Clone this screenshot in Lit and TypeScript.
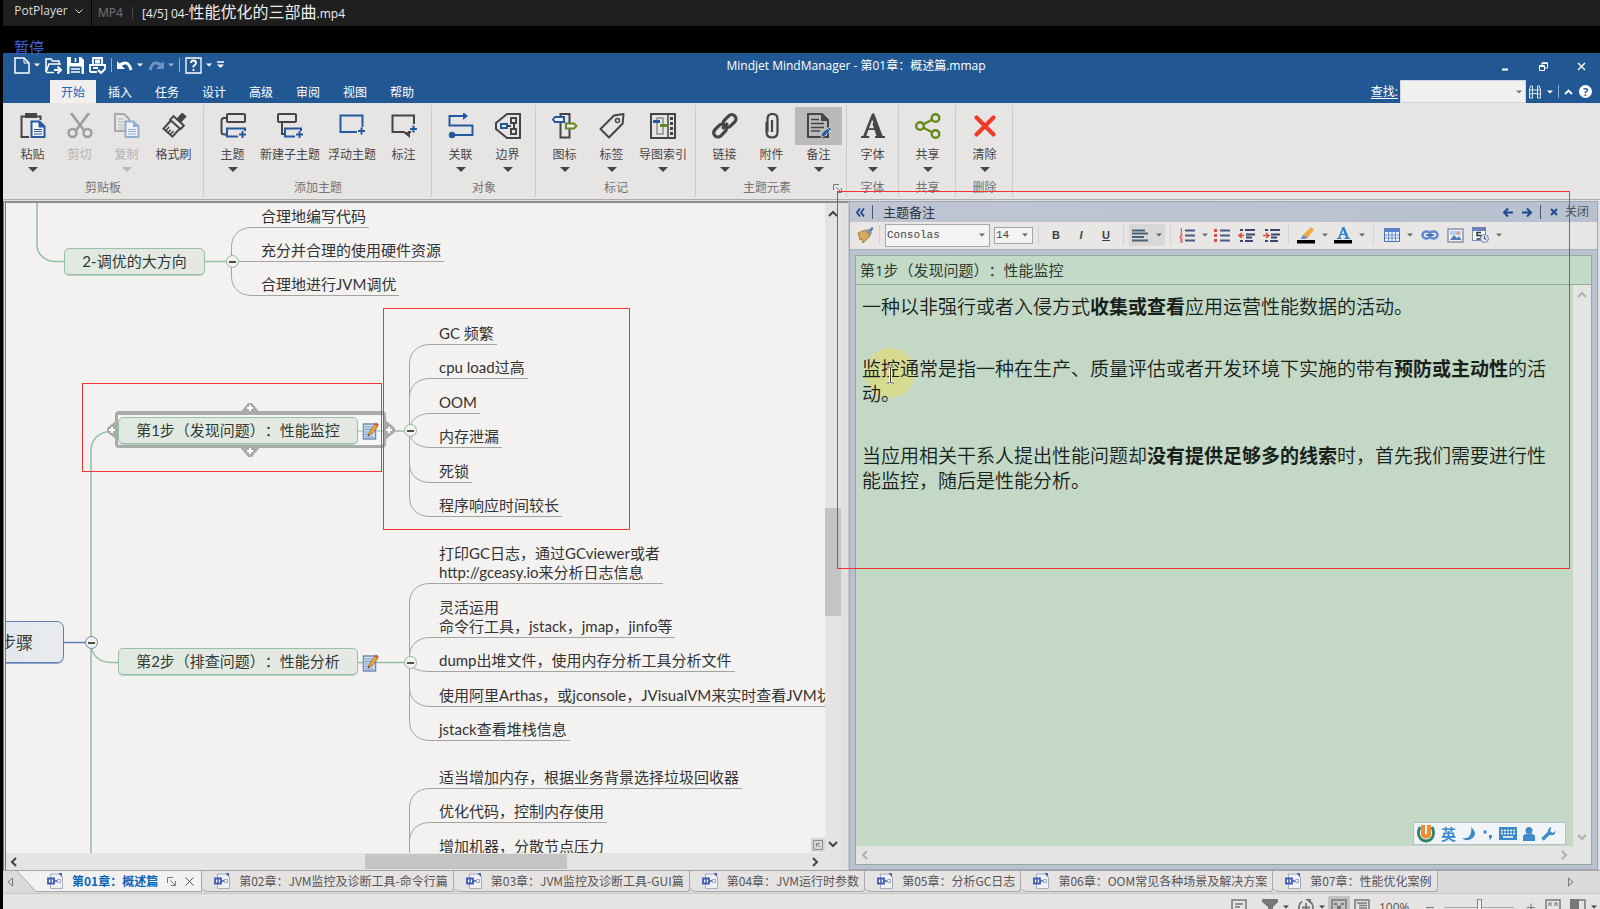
import { LitElement, html, svg, css, nothing } from "lit";
import { customElement } from "lit/decorators.js";
import { classMap } from "lit/directives/class-map.js";
import { styleMap } from "lit/directives/style-map.js";

const DARK = "#454545";
const BLUE = "#2459a0";
const GREEN = "#628a1c";

const base = css`
  *, *::before, *::after { box-sizing: border-box; }
  button, input, select { font: inherit; color: inherit; margin: 0; padding: 0; border: 0; background: none; border-radius: 0; outline: none; }
  button { cursor: pointer; display: inline-flex; align-items: center; justify-content: center; }
  svg { display: block; flex: none; }
`;

const ico = (w: number, h: number, body: unknown) =>
  html`<svg width=${w} height=${h} viewBox="0 0 ${w} ${h}" fill="none" aria-hidden="true">${body}</svg>`;

const caret = (color = "#555", w = 7) =>
  html`<svg width=${w} height="4" viewBox="0 0 8 4" aria-hidden="true"><path d="M0 0h8L4 4z" fill=${color}/></svg>`;

const chevron = (dir: "up" | "down" | "left" | "right", color = "#444") => {
  const d = { up: "M1 8l4-4 4 4", down: "M1 3l4 4 4-4", left: "M7 1L3 5l4 4", right: "M3 1l4 4-4 4" }[dir];
  return html`<svg width="10" height="10" viewBox="0 0 10 10" fill="none" aria-hidden="true"><path d=${d} stroke=${color} stroke-width="2"/></svg>`;
};

const plus = (x: number, y: number) =>
  svg`<path d="M${x - 3.5} ${y}h7M${x} ${y - 3.5}v7" stroke=${BLUE} stroke-width="2"/>`;

const ribbonIcons: Record<string, unknown> = {
  paste: svg`<path d="M9 24H1.5V3.5h19V7" stroke=${DARK} stroke-width="2"/><path d="M5 0h12v5H5z" fill=${DARK}/>
    <path d="M11.5 8.5h8l5 5V24h-13z" fill="#f4f4f6" stroke=${BLUE} stroke-width="2"/><path d="M19 9v5h5" fill=${BLUE} stroke=${BLUE}/>
    <path d="M14 16.5h8M14 18.5h8M14 21h8" stroke=${BLUE}/>`,
  cut: svg`<path d="M4 0l13.500 18M22 0L8.500 18" stroke="#9d9d9d" stroke-width="2.600"/><circle cx="5.500" cy="20" r="4" stroke="#9d9d9d" stroke-width="2.400"/><circle cx="20.500" cy="20" r="4" stroke="#9d9d9d" stroke-width="2.400"/>`,
  copy: svg`<path d="M1 1h9l5 5v12H1z" stroke="#a9a9a9" stroke-width="2"/><path d="M4 6h5M4 9h8M4 12h8M4 15h6" stroke="#b5b5b5"/>
    <path d="M11.500 8.500h8l5 5V24h-13z" fill="#eef1f6" stroke="#93add0" stroke-width="2"/><path d="M19 9v5h5" fill="#93add0"/><path d="M14 16.500h8M14 18.500h8M14 21h8" stroke="#93add0"/>`,
  painter: svg`<g transform="rotate(42 13 13)" stroke=${DARK} stroke-width="2"><path d="M11 -1.500h4v7h-4z" fill=${DARK}/><path d="M6 6h14v5H6z"/><path d="M7 11v11h12V11"/><path d="M10 22v-5M13 22v-4M16 22v-5" stroke-width="1.500"/></g>`,
  topic: svg`<path d="M7 5H4Q1.500 5 1.500 8v11q0 2.500 3 2.500h2" stroke=${DARK} stroke-width="2"/><rect x="7" y="1" width="18" height="8" rx="1" stroke=${DARK} stroke-width="2"/>
    <path d="M25 18v-2.500H7V23.500h11" stroke=${BLUE} stroke-width="2"/>${plus(22.5, 21.5)}`,
  subtopic: svg`<rect x="1" y="1" width="18" height="8" rx="1" stroke=${DARK} stroke-width="2"/><path d="M5 9v12h3" stroke=${DARK} stroke-width="2"/>
    <path d="M24 18v-2.500H8V23.500h10" stroke=${BLUE} stroke-width="2"/>${plus(22.500, 21.5)}`,
  floating: svg`<path d="M18 19H1.500V2.500h22V14" stroke=${BLUE} stroke-width="2"/>${plus(22.500, 18)}`,
  callout: svg`<path d="M23 11V2.500H1.500V19H13l5 4v-4h2" stroke=${DARK} stroke-width="2"/><path d="M12 19h7v5z" fill=${DARK}/>${plus(22.5, 16)}`,
  relation: svg`<path d="M17 3H1.500v9.500h23V22H5" stroke=${BLUE} stroke-width="2"/><path d="M15-1l5 4-5 4z" fill=${BLUE}/><circle cx="4" cy="22" r="3.200" fill=${BLUE}/>`,
  boundary: svg`<path d="M25 1H12L1 10v6l11 9h13z" stroke=${DARK} stroke-width="2"/><rect x="6" y="11" width="6" height="4" stroke=${BLUE} stroke-width="2"/>
    <path d="M12 13h4M19 9v8" stroke=${DARK} stroke-width="2"/><rect x="16" y="5" width="5" height="5" stroke=${DARK} stroke-width="2"/><rect x="16" y="16" width="5" height="5" stroke=${DARK} stroke-width="2"/>`,
  marker: svg`<rect x="8.500" y="1" width="9" height="23.500" stroke=${DARK} stroke-width="2"/><path d="M3 4h9v5H3L1 6.500z" fill="#eee" stroke=${BLUE} stroke-width="2"/><path d="M14 10.500h8l2.500 2.500-2.500 2.500h-8z" fill="#eee" stroke=${GREEN} stroke-width="2"/>`,
  tag: svg`<path d="M15 2.500L24.500 1l-.8 9.500L10 24.500 1.500 16z" stroke=${DARK} stroke-width="2" stroke-linejoin="round"/><circle cx="18.500" cy="7.500" r="2" stroke=${DARK} stroke-width="1.500"/>`,
  index: svg`<rect x="1" y="1" width="24" height="24" stroke=${DARK} stroke-width="2"/><path d="M18 1v24" stroke=${DARK} stroke-width="1.500"/><rect x="7" y="5" width="6" height="16" stroke="#8b8b8b" stroke-width="1.500"/>
    <path d="M3 8.500h7" stroke=${BLUE} stroke-width="3"/><path d="M10 12.500h7" stroke=${GREEN} stroke-width="3"/><path d="M21.500 4v18" stroke=${DARK} stroke-width="3" stroke-dasharray="3 2"/>`,
  link: svg`<g transform="rotate(-45 13 13)" stroke=${DARK} stroke-width="3.200"><rect x="-1" y="8.500" width="14.500" height="8.500" rx="4.200"/><rect x="12.500" y="8.500" width="14.500" height="8.500" rx="4.200"/><path d="M9 13h8"/></g>`,
  clip: svg`<path d="M8.500 19V6q0-5 5-5t5 5v13q0 5.500-5.500 5.500T7.500 19V9M13 19V7" stroke=${DARK} stroke-width="2.200"/>`,
  notes: svg`<path d="M2 1h14l6 6v17H2z" stroke=${DARK} stroke-width="2"/><path d="M15 1v7h7z" fill=${DARK}/><path d="M5 6.500h8M5 10.500h13M5 14.500h13M5 18h9" stroke=${DARK} stroke-width="1.500"/>
    <path d="M15 24.500l1-4.500 7-6 2.500 2.500-7 6.500z" fill=${BLUE} stroke="#bababa"/><path d="M21 15l4 4" stroke="#ddd"/>`,
  font: svg`<path d="M1 25v-1.700l2.300-.6L12 .5h2.200l8.300 22.200 2.500.6V25h-10v-1.700l3-.6-2-5.700H8.300l-2 5.700 3 .6V25zM9 15.200h6.300L12.200 6.400z" fill=${DARK}/><path d="M15 8l5 15h-3.500l-4-12z" fill=${DARK}/>`,
  share: svg`<g stroke=${GREEN} stroke-width="2.400"><circle cx="5" cy="13" r="3.800"/><circle cx="20.500" cy="5" r="3.800"/><circle cx="20.500" cy="21" r="3.800"/><path d="M8.500 11.300l8.500-4.500M8.500 14.800l8.500 4.500"/></g>`,
  clear: svg`<path d="M4.500 4.500l17 17M21.500 4.500l-17 17" stroke="#f03a26" stroke-width="4.200" stroke-linecap="round"/>`,
};

interface Tool { label: string; icon: string; drop?: boolean; off?: boolean; on?: boolean; }
interface Group { name: string; tools: Tool[]; launcher?: boolean; tight?: boolean; }

const groups: Group[] = [
  { name: "剪贴板", tools: [
    { label: "粘贴", icon: "paste", drop: true }, { label: "剪切", icon: "cut", off: true },
    { label: "复制", icon: "copy", drop: true, off: true }, { label: "格式刷", icon: "painter" } ] },
  { name: "添加主题", tools: [
    { label: "主题", icon: "topic", drop: true }, { label: "新建子主题", icon: "subtopic" },
    { label: "浮动主题", icon: "floating" }, { label: "标注", icon: "callout" } ] },
  { name: "对象", tools: [{ label: "关联", icon: "relation", drop: true }, { label: "边界", icon: "boundary", drop: true }] },
  { name: "标记", tools: [
    { label: "图标", icon: "marker", drop: true }, { label: "标签", icon: "tag", drop: true }, { label: "导图索引", icon: "index", drop: true } ] },
  { name: "主题元素", launcher: true, tools: [
    { label: "链接", icon: "link", drop: true }, { label: "附件", icon: "clip", drop: true }, { label: "备注", icon: "notes", drop: true, on: true } ] },
  { name: "字体", tight: true, tools: [{ label: "字体", icon: "font", drop: true }] },
  { name: "共享", tools: [{ label: "共享", icon: "share", drop: true }] },
  { name: "删除", tools: [{ label: "清除", icon: "clear", drop: true }] },
];

const ribbonTabs = ["开始", "插入", "任务", "设计", "高级", "审阅", "视图", "帮助"];

const documents = [
  "第01章：概述篇", "第02章：JVM监控及诊断工具-命令行篇", "第03章：JVM监控及诊断工具-GUI篇", "第04章：JVM运行时参数",
  "第05章：分析GC日志", "第06章：OOM常见各种场景及解决方案", "第07章：性能优化案例",
];

const launcherIcon = (c = "#777") => ico(9, 9, svg`<path d="M.5 6V.5H6M3.500 3.500l4.500 4.500M8.500 4v4.500H4" stroke=${c}/>`);

/* ---------- mind map ---------- */

interface Leaf { lines: string[]; y: number; }
interface Branch { x: number; y: number; leaves: Leaf[]; }

// Every leaf is placed by the y of its underline; x, y of a branch is its collapse button.
const branches: Branch[] = [
  { x: 232, y: 262, leaves: [
    { lines: ["合理地编写代码"], y: 227 }, { lines: ["充分并合理的使用硬件资源"], y: 261 }, { lines: ["合理地进行JVM调优"], y: 295 } ] },
  { x: 410, y: 431, leaves: [
    { lines: ["GC 频繁"], y: 344 }, { lines: ["cpu load过高"], y: 378 }, { lines: ["OOM"], y: 413 },
    { lines: ["内存泄漏"], y: 447 }, { lines: ["死锁"], y: 482 }, { lines: ["程序响应时间较长"], y: 516 } ] },
  { x: 410, y: 662, leaves: [
    { lines: ["打印GC日志，通过GCviewer或者", "http://gceasy.io来分析日志信息"], y: 583 },
    { lines: ["灵活运用", "命令行工具，jstack，jmap，jinfo等"], y: 637 },
    { lines: ["dump出堆文件，使用内存分析工具分析文件"], y: 671 },
    { lines: ["使用阿里Arthas，或jconsole，JVisualVM来实时查看JVM状态"], y: 706 },
    { lines: ["jstack查看堆栈信息"], y: 740 } ] },
  { x: 410, y: 900, leaves: [
    { lines: ["适当增加内存，根据业务背景选择垃圾回收器"], y: 788 },
    { lines: ["优化代码，控制内存使用"], y: 822 }, { lines: ["增加机器，分散节点压力"], y: 857 } ] },
];

const LINE = 19;

@customElement("mind-map")
export class MindMap extends LitElement {
  static styles = [base, css`
    :host { display: grid; grid-template-columns: minmax(0, 1fr) 16px; grid-template-rows: minmax(0, 1fr) 17px; min-width: 0; min-height: 0; background: #e4e4e3; }
    .view { position: relative; overflow: hidden; background: #f3f2f1; }
    .stage { position: absolute; left: -6px; top: -203px; width: 1400px; height: 1200px; }
    .wires { position: absolute; inset: 0; }
    .leaf { position: absolute; padding: 0 3px 1px 9px; border-bottom: 1px solid #a2a4a3; white-space: nowrap; }
    .leaf span { display: block; }
    .node { position: absolute; display: flex; align-items: center; justify-content: center; border: 1px solid #97c0a8; border-radius: 5px; background: linear-gradient(90deg, #dfe9e2, #e6e8e3); color: #2f3a35; white-space: nowrap; box-shadow: 0 1px 0 #b5cfbf; }
    .root { justify-content: flex-end; padding-right: 30px; border-color: #5f80b4; background: linear-gradient(90deg, #dde5ef, #e9ebee); font-size: 17px; box-shadow: 0 1px 0 #8ea5c8; border-radius: 7px; }
    .frame { position: absolute; border: 3px solid #a9abaa; border-radius: 4px; border-top-width: 4px; background: #f6f6f5; }
    .fold { position: absolute; width: 13px; height: 13px; border-radius: 50%; border: 1px solid #8fb59d; background: #f3f2f1; }
    .fold::before { content: ""; width: 7px; height: 2px; background: #4c4c4c; flex: none; }
    .fold.blue { border-color: #6c86b4; }
    .grip, .memo { position: absolute; }
    .vbar { display: flex; flex-direction: column; align-items: center; padding: 5px 0 4px; }
    .hbar { display: flex; align-items: center; padding: 0 5px 0 3px; }
    .vbar .before { flex: 286; } .vbar .thumb { flex: 107; width: 16px; background: #c4c4c3; } .vbar .after { flex: 220; }
    .hbar .before { flex: 342; } .hbar .thumb { flex: 200; height: 15px; background: #c4c4c3; } .hbar .after { flex: 241; }
    .zoomfit { position: absolute; right: 0; bottom: 1px; width: 14px; height: 14px; background: #d6d6d5; }
  `];

  private wire(b: Branch, leaf: Leaf) {
    const end = b.x + 20;
    const y = leaf.y + 0.5;
    const x = b.x - 0.5;
    if (Math.abs(y - b.y) < 3) return svg`<path d="M${x} ${y}H${end}"/>`;
    const dir = y < b.y ? 1 : -1;
    const turn = Math.min(19, Math.abs(y - b.y));
    return svg`<path d="M${x} ${b.y}V${y + dir * turn}C${x} ${y + (dir * turn) / 2.4} ${x + 8} ${y} ${end} ${y}"/>`;
  }

  private box(x: number, y: number, w: number, h: number) {
    return styleMap({ left: `${x}px`, top: `${y}px`, width: `${w}px`, height: `${h}px` });
  }

  private memo(x: number, y: number) {
    return html`<svg class="memo" style=${styleMap({ left: `${x}px`, top: `${y}px` })} width="17" height="18" viewBox="0 0 17 18" fill="none" aria-hidden="true">
      <path d="M1.500 2h12v15h-12z" fill="#d3e0f3" stroke="#6f8db9" stroke-width="1.500"/><path d="M3 5h7M3 7.500h6M3 10h5M3 12.500h4M3 15h8" stroke="#6e8fc4"/>
      <path d="M6 14l1.500-4L13 2l3 2-6 8z" fill="#e9a73c" stroke="#8a5a22" stroke-width=".7"/><path d="M12.500 2.500L14 .5l2.700 1.700L15.500 4.500z" fill="#d9503f"/><path d="M6 14l.6-1.700 1 .8z" fill="#333"/></svg>`;
  }

  private grip(x: number, y: number, d: string) {
    return html`<svg class="grip" style=${styleMap({ left: `${x - 11}px`, top: `${y - 11}px` })} width="22" height="22" viewBox="-11 -11 22 22" aria-hidden="true">
      <path d=${d} fill="#a9abaa"/><path d="M-3 0h6M0-3v6" stroke="#fff" stroke-width="2"/></svg>`;
  }

  private fold(x: number, y: number, blue = false) {
    return html`<button class=${classMap({ fold: true, blue })} aria-label="折叠" style=${styleMap({ left: `${x - 6}px`, top: `${y - 6}px` })}></button>`;
  }

  render() {
    return html`
      <div class="view">
        <div class="stage">
          <svg class="wires" width="1400" height="1200" fill="none" stroke="#a2a4a3" aria-hidden="true">
            ${branches.map((b) => b.leaves.map((l) => this.wire(b, l)))}
            <g stroke="#93bfa5" stroke-width="1.500">
              <path d="M37 190v55c0 9 8 16.500 18 16.500h9M205 261.500h22M358 431h47M358 662.500h47"/>
              <path d="M91 900V450c0-10 8-18.500 20-18.500M91 643c0 12 8 19.500 20 19.500h8"/>
            </g>
            <path d="M64 642.500h22" stroke="#5f80b4" stroke-width="1.500"/>
          </svg>
          ${branches.map((b) => b.leaves.map((l) => html`
            <div class="leaf" style=${styleMap({ left: `${b.x + 20}px`, top: `${l.y - l.lines.length * LINE - 1}px` })}>
              ${l.lines.map((t) => html`<span>${t}</span>`)}
            </div>`))}
          <div class="node" style=${this.box(64, 248, 141, 27)}>2-调优的大方向</div>
          <div class="node root" style=${this.box(-60, 621, 124, 42)}>步骤</div>
          ${this.grip(250, 408, "M-11 6L-2-5h4L11 6z")}
          ${this.grip(250, 451, "M-11-5L-2 6h4L11-5z")}
          ${this.grip(112, 430, "M6-11L-5-2v4L6 11z")}
          ${this.grip(389, 430, "M-5-11L6-2v4L-5 11z")}
          <div class="frame" style=${this.box(115, 411, 271, 37)}></div>
          <svg class="wires" width="1400" height="1200" stroke="#93bfa5" aria-hidden="true"><path d="M358 431h25"/></svg>
          <div class="node" style=${this.box(118, 417, 240, 27)}>第1步（发现问题）：性能监控</div>
          <div class="node" style=${this.box(118, 648, 240, 27)}>第2步（排查问题）：性能分析</div>
          ${this.memo(362, 422)} ${this.memo(362, 654)}
          ${this.fold(232, 261)} ${this.fold(410, 430)} ${this.fold(410, 662)} ${this.fold(91, 642, true)}
        </div>
        <button class="zoomfit" aria-label="全图">${ico(10, 10, svg`<path d="M.5.5h9v9h-9zM3.500 7V3.500H7M4 4l3 3" stroke="#8c8c8c"/>`)}</button>
      </div>
      <div class="vbar">
        <button aria-label="向上滚动">${chevron("up")}</button><span class="before"></span><span class="thumb"></span><span class="after"></span>
        <button aria-label="向下滚动">${chevron("down")}</button>
      </div>
      <div class="hbar">
        <button aria-label="向左滚动">${chevron("left")}</button><span class="before"></span><span class="thumb"></span><span class="after"></span>
        <button aria-label="向右滚动">${chevron("right")}</button>
      </div>`;
  }
}

/* ---------- notes ---------- */

const lines16 = (shift: number) => svg`<path d="M${shift} 2.500h${16 - shift}M${shift} 7.500h${16 - shift}M${shift} 12.500h${16 - shift}" stroke="#4b5b84" stroke-width="2"/>`;

@customElement("notes-panel")
export class NotesPanel extends LitElement {
  static styles = [base, css`
    :host { display: flex; flex-direction: column; min-width: 0; min-height: 0; border: 1px solid #9fa5b3; background: #b9c2d1; }
    .head { display: flex; align-items: center; height: 20px; flex: none; padding: 0 8px 0 6px; color: #2c3445; background: linear-gradient(90deg, #bfc5d2, #b7c1d0); }
    .title { flex: 1; font-size: 13px; padding-left: 10px; }
    .rule { width: 1px; height: 14px; background: #4e566a; }
    .head .first { margin-left: 7px; }
    .head button { margin-left: 9px; }
    .head .rule.last { margin-left: 8px; }
    .close { gap: 7px; font-size: 12px; color: #4d5260; }
    .bar { display: flex; align-items: center; height: 28px; flex: none; padding: 0 7px 1px; background: #e8e7e6; border-bottom: 1px solid #a9aebb; }
    .cut { width: 1px; height: 20px; background: #d2d2d2; margin: 0 5px; }
    .pick { position: relative; display: flex; align-items: center; border: 1px solid #a6a6a6; background: #f3f3f3; }
    .pick select { appearance: none; width: 100%; height: 100%; padding-left: 1px; font: 11px "Liberation Mono", monospace; color: #444; }
    .pick svg { position: absolute; right: 4px; pointer-events: none; }
    .face { width: 105px; height: 23px; } .size { width: 39px; height: 17px; margin-left: 4px; }
    .b, .i, .u { width: 24px; height: 22px; font: 11px "Liberation Sans", sans-serif; color: #3f3f3f; }
    .b { font-weight: 900; } .i { font-style: italic; font-weight: bold; } .u { text-decoration: underline; font-weight: bold; }
    .styles { display: flex; gap: 1px; }
    .align { width: 36px; height: 22px; gap: 8px; background: #d9d8d7; }
    .tool { gap: 7px; margin: 0 3px; min-height: 20px; }
    .tool.snug { margin: 0 5px; }
    .body { flex: 1; min-height: 0; margin: 5px 5px 4px 5px; border: 1px solid #97a79f; display: grid; grid-template-columns: minmax(0, 1fr) 18px; grid-template-rows: 29px minmax(0, 1fr) 18px; background: #e4e4e3; }
    .topic { grid-column: 1 / 3; background: #c3dac6; border-bottom: 1px solid #98ab9b; padding-left: 4px; line-height: 29px; color: #2e3b33; font-size: 15px; }
    .text { position: relative; background: #c3d8c5; padding: 10px 18px 0 6px; font-size: 19px; font-weight: 350; line-height: 25px; color: #18201b; overflow: hidden; outline: none; }
    .text b { font-weight: 700; }
    .text p { margin: 0 0 37px; position: relative; }
    .glow { position: absolute; left: 9px; top: 63px; width: 50px; height: 50px; border-radius: 50%; background: #dbdc88; opacity: .85; }
    .beam { position: absolute; left: 30px; top: 81px; }
    .v { display: flex; flex-direction: column; justify-content: space-between; align-items: center; padding: 4px 0; }
    .h { display: flex; justify-content: space-between; align-items: center; padding: 0 4px; }
  `];

  render() {
    const tri = caret("#666", 6);
    return html`
      <div class="head">
        ${ico(9, 9, svg`<path d="M4 .5l-3 4 3 4M8 .5l-3 4 3 4" stroke="#1d4a92" stroke-width="1.800"/>`)}
        <span class="rule first"></span><span class="title">主题备注</span>
        <button aria-label="上一条">${ico(10, 9, svg`<path d="M10 4.500H2M5 .5l-4 4 4 4" stroke="#1d4a92" stroke-width="2"/>`)}</button>
        <button aria-label="下一条">${ico(10, 9, svg`<path d="M0 4.500h8M5 .5l4 4-4 4" stroke="#1d4a92" stroke-width="2"/>`)}</button>
        <span class="rule last"></span>
        <button class="close">${ico(8, 8, svg`<path d="M1 1l6 6M7 1L1 7" stroke="#1d4a92" stroke-width="2"/>`)}关闭</button>
      </div>
      <div class="bar">
        <button aria-label="格式刷">${ico(17, 17, svg`<path d="M1 6l7-3 5 6-7 7-1-4-2 1z" fill="#d8ab5c" stroke="#96722f" stroke-width=".8"/><path d="M8 3l4-1 3 4-2 3z" fill="#8e8e9c"/><path d="M12 3l3-3 1.500 1.500L14 5z" fill="#5f6fa8"/>`)}</button>
        <span class="cut"></span>
        <span class="pick face"><select aria-label="字体"><option>Consolas</option></select>${tri}</span>
        <span class="pick size"><select aria-label="字号"><option>14</option></select>${tri}</span>
        <span class="cut"></span>
        <span class="styles"><button class="b">B</button><button class="i">I</button><button class="u">U</button></span>
        <span class="cut"></span>
        <button class="align" aria-label="左对齐">${ico(16, 13, svg`<path d="M0 1.500h13M0 4.500h16M0 8h12M0 11.500h16" stroke="#45627b" stroke-width="2"/>`)}${tri}</button>
        <span class="cut"></span>
        <button class="tool" aria-label="编号">${ico(16, 15, svg`${lines16(6)}<path d="M1 1h1.500v4M1 6h2v2H1v2h2.500M1 11h2v4H1M1 13h2" stroke="#d0524a"/>`)}${tri}</button>
        <button class="tool" aria-label="项目符号">${ico(16, 15, svg`${lines16(6)}<path d="M0 1h3v3H0zM0 6h3v3H0zM0 11h3v3H0z" fill="#dc4b3f"/>`)}</button>
        <button class="tool snug" aria-label="减少缩进">${ico(17, 15, svg`<path d="M2 2h3M7 2h10M8 6.500h9M8 9.500h6M2 13h3M7 13h8" stroke="#39466e" stroke-width="2"/><path d="M6 7.500H2M4 5L1 7.500 4 10" stroke="#dc4b3f" stroke-width="1.500"/>`)}</button>
        <button class="tool" aria-label="增加缩进">${ico(17, 15, svg`<path d="M2 2h3M7 2h10M8 6.500h9M8 9.500h6M2 13h3M7 13h8" stroke="#39466e" stroke-width="2"/><path d="M0 7.500h5M3 5l3 2.500L3 10" stroke="#dc4b3f" stroke-width="1.500"/>`)}</button>
        <span class="cut"></span>
        <button class="tool" aria-label="突出显示">${ico(18, 17, svg`<path d="M0 13h18v3.500H0z" fill="#000"/><path d="M6 8l8-8 3 2.500-6 8z" fill="#f3a83b"/><path d="M6 8l5 2.500-3 1.500H3.500z" fill="#6f90c4"/>`)}${tri}</button>
        <button class="tool" aria-label="字体颜色">${ico(18, 17, svg`<path d="M0 13h18v3.500H0z" fill="#000"/><path d="M3 12v-1l1.300-.3L8.500 0h2l4.200 10.700 1.300.3v1h-5.500v-1l1.400-.3-.9-2.700H7l-.9 2.700 1.400.3v1zM7.500 6.700h3L9 2.800z" fill="#2d7fd0"/>`)}${tri}</button>
        <span class="cut"></span>
        <button class="tool snug" aria-label="表格">${ico(16, 14, svg`<path d="M.5.5h15v13H.5z" fill="#eef3fb" stroke="#4a6db4"/><path d="M0 0h16v4H0z" fill="#5b80c8"/><path d="M4.500 3v10M8 3v10M11.500 3v10M1 7h14M1 10h14" stroke="#6d8fcf"/>`)}${tri}</button>
        <button class="tool" aria-label="超链接">${ico(18, 10, svg`<rect x="1.500" y="1.500" width="8" height="7" rx="3.500" stroke="#5f8bd2" stroke-width="2.500"/><rect x="8.500" y="1.500" width="8" height="7" rx="3.500" stroke="#5f8bd2" stroke-width="2.500"/><path d="M5 5h8" stroke="#2f5eb0" stroke-width="1.500"/>`)}</button>
        <button class="tool snug" aria-label="图像">${ico(17, 15, svg`<path d="M1 1h15v13H1z" fill="#eef3fa" stroke="#8c93a3" stroke-width="1.500"/><path d="M3 3h11v4H3z" fill="#b3cceb"/><path d="M3 12l4-5 3 3 2-2 2.500 4z" fill="#557bb4"/><circle cx="11" cy="5" r="1.500" fill="#e99c52"/>`)}</button>
        <button class="tool" aria-label="时间戳">${ico(17, 16, svg`<path d="M.5.5h13v13H.5z" fill="#f4f6fa" stroke="#7d8bae"/><path d="M0 0h14v4H0z" fill="#6c83b8"/><path d="M9 5.500H5V8.500h4V12H4.500" stroke="#333" stroke-width="1.500"/><circle cx="12.500" cy="11.500" r="4" fill="#dfe7f3" stroke="#6c83b8"/><path d="M12.500 9v3h2" stroke="#456"/>`)}${tri}</button>
      </div>
      <div class="body">
        <div class="topic">第1步（发现问题）：性能监控</div>
        <div class="text" contenteditable="true" role="textbox" aria-label="备注内容" spellcheck="false"><span class="glow"></span>
          <p>一种以非强行或者入侵方式<b>收集或查看</b>应用运营性能数据的活动。</p>
          <p>监控通常是指一种在生产、质量评估或者开发环境下实施的带有<b>预防或主动性</b>的活动。</p>
          <p>当应用相关干系人提出性能问题却<b>没有提供足够多的线索</b>时，首先我们需要进行性能监控，随后是性能分析。</p>
          <svg class="beam" width="9" height="18" viewBox="0 0 9 18" fill="none" aria-hidden="true"><path d="M1 1h2.500l1 1 1-1H8M4.500 2v14M1 17h2.500l1-1 1 1H8" stroke="#fff" stroke-width="3"/><path d="M1 1h2.500l1 1 1-1H8M4.500 2v14M1 17h2.500l1-1 1 1H8" stroke="#333"/></svg>
        </div>
        <div class="v">${chevron("up", "#b0b0b0")}${chevron("down", "#b0b0b0")}</div>
        <div class="h">${chevron("left", "#b0b0b0")}${chevron("right", "#b0b0b0")}</div>
      </div>`;
  }
}

/* ---------- application shell ---------- */

@customElement("app-root")
export class AppRoot extends LitElement {
  static styles = [base, css`
    :host { display: flex; flex-direction: column; position: relative; height: 100vh; overflow: hidden; background: #000; padding-left: 3px; color: #222;
      font: 12px/16px "Open Sans", "Noto Sans CJK SC", sans-serif; text-spacing-trim: space-all; }
    .player { display: flex; height: 26px; flex: none; background: #1f1f1f; color: #eee; align-items: center; margin-bottom: 27px; }
    .brand { height: 26px; width: 89px; border-right: 1px solid #000; gap: 7px; color: #ddd; padding: 0 0 4px 3px; }
    .kind { color: #777; padding: 0 9px 0 6px; border-right: 1px solid #4a4a4a; line-height: 12px; }
    .file { padding-left: 9px; font-size: 12px; line-height: 26px; white-space: nowrap; }
    .file span { font-size: 16px; }
    .osd { position: absolute; left: 14px; top: 37px; font-size: 15px; line-height: 20px; color: #4763d6; }
    .top { background: #215893; color: #fff; flex: none; }
    .titlebar { display: flex; align-items: center; height: 26px; padding: 0 14px 0 11px; }
    .quick { display: flex; align-items: center; gap: 5px; padding-bottom: 2px; }
    .quick button { gap: 4px; }
    .quick i { width: 1px; height: 14px; background: #8fadd0; }
    .title { flex: 1; text-align: center; padding-right: 12px; }
    .window { display: flex; gap: 28px; }
    .window button { width: 10px; height: 16px; }
    .menus { display: flex; align-items: flex-end; height: 24px; padding: 0 8px 0 47px; gap: 1px; }
    .menu { width: 46px; height: 23px; flex: none; padding-top: 2px; }
    .menu.on { background: #f1f0ef; color: #1668b8; }
    .find { margin-left: auto; display: flex; align-items: center; gap: 2px; }
    .find label { text-decoration: underline; text-underline-offset: 2px; white-space: nowrap; }
    .combo { display: flex; width: 126px; height: 23px; background: #f0f0ef; border: 1px solid #cdd6e2; }
    .combo input { flex: 1; min-width: 0; color: #333; padding-left: 3px; }
    .combo button { width: 13px; }
    .find .glass { gap: 5px; }
    .find .bar { width: 1px; height: 13px; background: #8fadd0; margin: 0 3px; }
    .find .help { width: 13px; height: 13px; border-radius: 50%; background: #fff; color: #215893; font-weight: bold; font-size: 11px; line-height: 13px; margin-left: 4px; }
    .ribbon { display: flex; height: 97px; flex: none; background: #e6e5e4; padding: 2px 0; border-bottom: 1px solid #acacab; }
    .group { display: flex; flex-direction: column; justify-content: space-between; padding: 2px 4px 1px 5px; border-right: 1px solid #cccbca; flex: none; }
    .group:first-child { padding-left: 6px; padding-right: 6px; }
    .group.tight { padding-left: 2px; padding-right: 2px; }
    .tools { display: flex; }
    .item { flex-direction: column; justify-content: flex-start; min-width: 47px; color: #4a4648; }
    .item .pic { display: flex; align-items: center; justify-content: center; width: 47px; height: 38px; padding-bottom: 1px; }
    .item.on .pic { background: #bababa; }
    .item .name { line-height: 18px; padding: 1px 4px 0; white-space: nowrap; margin-bottom: 3px; }
    .item.off .name { color: #b5b0b2; }
    .caption { display: flex; align-items: center; color: #757274; }
    .caption span { flex: 1; text-align: center; }
    .work { flex: 1; min-height: 0; display: grid; grid-template-columns: minmax(0, 846fr) minmax(0, 751fr); background: #e1e0df; padding-top: 1px; }
    .left { display: flex; padding-right: 7px; border-top: 2px solid #8d8d8d; border-left: 3px double #777; min-width: 0; min-height: 0; border-right: 1px solid #c9c9c9; }
    .left mind-map { flex: 1; font-family: Lato, "Noto Sans CJK SC", sans-serif; font-size: 15px; line-height: 19px; color: #333; }
    .right { display: flex; padding-right: 2px; min-width: 0; min-height: 0; }
    .right notes-panel { flex: 1; }
    .docs { display: flex; height: 24px; flex: none; background: #dddbda; border-top: 1px solid #a5a5a5; border-bottom: 1px solid #c8c8c7; font-family: "Noto Sans CJK SC", sans-serif; }
    .arrow { width: 14px; }
    .docs .end { margin-left: auto; width: 58px; }
    .doc { height: 21px; padding: 0 5px 0 12px; gap: 9px; color: #575355; background: #e5e3e2; border: 1px solid #a9a9a9; border-top: 0; border-left: 0; border-radius: 0 0 3px 6px; white-space: nowrap; flex: none; }
    .doc.on { background: #f3f2f1; color: #0c63b7; font-weight: bold; padding-left: 9px; padding-right: 7px; border-radius: 0; }
    .status { display: flex; align-items: flex-start; justify-content: flex-end; height: 15px; flex: none; overflow: hidden; background: #e5e4e3; padding: 5px 3px 0 0; color: #555; }
    .status button { gap: 5px; margin-right: 9px; }
    .status button:first-child { margin-right: 15px; }
    .status .sel { width: 22px; height: 22px; margin: -3px 4px 0 -6px; background: #c2c2c1; padding-top: 3px; align-items: flex-start; }
    .status .pct { width: 44px; margin-right: 3px; line-height: 17px; }
    .status input { appearance: none; width: 70px; height: 17px; background: linear-gradient(#aaa, #aaa) 0 8px / 100% 1px no-repeat; margin-right: 13px; }
    .status input::-webkit-slider-thumb { appearance: none; width: 5px; height: 17px; border: 1px solid #888; background: #eee; }
    .status button.last { margin-right: 0; }
    .ime { position: absolute; right: 34px; bottom: 64px; display: flex; align-items: center; gap: 6px; height: 23px; padding: 0 9px 0 3px; background: #f1f4f7; border: 1px solid #b5bfc9; color: #3d8acb; font-size: 15px; font-weight: bold; }
    .mark { position: absolute; border: 1px solid #f03434; pointer-events: none; }
    .m1 { left: 82px; top: 383px; width: 300px; height: 89px; }
    .m2 { left: 383px; top: 308px; width: 247px; height: 222px; }
    .m3 { left: 837px; top: 191px; width: 733px; height: 378px; }
  `];

  private quick() {
    const W = "#fff";
    return html`<div class="quick">
      <button aria-label="新建">${ico(16, 17, svg`<path d="M1 1h9l5 5v10H1z" stroke=${W} stroke-width="1.500"/><path d="M10 1v5h5" stroke=${W}/>`)}${caret(W, 6)}</button>
      <button aria-label="打开">${ico(17, 17, svg`<path d="M1 15V2h5l1.500 2H14v3M1 15L4 7h12M1 15.500h8" stroke=${W} stroke-width="1.500"/><path d="M9 13h5M12.500 9.500L16 13l-3.500 3.500" stroke=${W} stroke-width="2"/>`)}</button>
      <button aria-label="保存">${ico(17, 17, svg`<path d="M0 0h14l3 3v14H0z" fill=${W}/><path d="M4 0v6h8V0M2.500 17V9.500h12V17" fill="#215893"/><path d="M8.500 1v4M4 12h9M4 15h9" stroke=${W} stroke-width="1.500"/>`)}</button>
      <button aria-label="打印">${ico(17, 17, svg`<path d="M4 7V1h9v6M1 15V8h15v3M1 15h7M4 11h5M6 3.500h5M6 5.500h5" stroke=${W} stroke-width="1.800"/><path d="M9 13l3 3 5-5" stroke=${W} stroke-width="2"/>`)}</button>
      <i></i>
      <button aria-label="撤消">${ico(16, 13, svg`<path d="M3 6q8-6 11 5" stroke=${W} stroke-width="3"/><path d="M0 2v8h8z" fill=${W}/>`)}${caret(W, 6)}</button>
      <button aria-label="重做">${ico(16, 13, svg`<path d="M13 6Q5 0 2 11" stroke="#6f94bf" stroke-width="3"/><path d="M16 2v8H8z" fill="#6f94bf"/>`)}${caret("#9bb5d3", 6)}</button>
      <i></i>
      <button aria-label="帮助">${ico(17, 17, svg`<path d="M1 1h15v15H1z" stroke=${W} stroke-width="1.300"/><path d="M6 6q0-2.500 2.500-2.500T11 6q0 1.500-2.500 3v1.500M8.500 12v2" stroke=${W} stroke-width="1.800"/>`)}${caret(W, 6)}</button>
      <button aria-label="自定义">${ico(7, 8, svg`<path d="M0 1h7" stroke=${W} stroke-width="1.500"/><path d="M0 3.500h7L3.500 7z" fill=${W}/>`)}</button>
    </div>`;
  }

  private docIcon() {
    return ico(16, 16, svg`<path d="M3.500 1h8.500l3.500 3v11.500h-12z" fill="#eef0f6" stroke="#a6acc0"/><path d="M11.500 0H15v4z" fill="#4a5fb0"/><path d="M1 5.500h6v5H1z" fill="#fff" stroke="#3e5bb4" stroke-width="1.800"/><path d="M4 6v4M7 8h3" stroke="#3e5bb4" stroke-width="1.500"/><path d="M10.500 6.500h3v3h-3z" stroke="#a3a7b4"/>`);
  }

  render() {
    const G = "#777";
    return html`
      <header class="player">
        <button class="brand">PotPlayer ${ico(8, 5, svg`<path d="M.5.5L4 4 7.500.5" stroke="#ddd"/>`)}</button>
        <span class="kind">MP4</span>
        <span class="file">[4/5] 04-<span>性能优化的三部曲</span>.mp4</span>
      </header>
      <div class="top">
        <div class="titlebar">
          ${this.quick()}
          <div class="title">Mindjet MindManager - 第01章：概述篇.mmap</div>
          <div class="window">
            <button aria-label="最小化">${ico(8, 10, svg`<path d="M1 8.500h6" stroke="#fff" stroke-width="2"/>`)}</button>
            <button aria-label="还原">${ico(9, 9, svg`<path d="M.5 3.500h5v5h-5zM3 3V.7h5.500V6H6M.5 4.500h5M3 1.500h5" stroke="#fff"/>`)}</button>
            <button aria-label="关闭">${ico(9, 9, svg`<path d="M1 1l7 7M8 1L1 8" stroke="#fff" stroke-width="1.400"/>`)}</button>
          </div>
        </div>
        <nav class="menus">
          ${ribbonTabs.map((t, i) => html`<button class=${classMap({ menu: true, on: i === 0 })}>${t}</button>`)}
          <div class="find">
            <label for="find">查找:</label>
            <div class="combo"><input id="find" type="text"><button aria-label="查找历史">${caret("#777", 6)}</button></div>
            <button class="glass" aria-label="查找">${ico(14, 14, svg`<path d="M1.500 13V5l1-4h2v12zM12.500 13V5l-1-4h-2v12zM2 5h10M5 8.500h4M1.500 9h3M9.500 9h3" stroke="#dfe8f2"/>`)}${caret("#fff", 6)}</button>
            <span class="bar"></span>
            <button aria-label="折叠功能区">${ico(9, 9, svg`<path d="M1 7l3.500-3.500L8 7" stroke="#fff" stroke-width="1.800"/>`)}</button>
            <button class="help" aria-label="帮助">?</button>
          </div>
        </nav>
      </div>
      <section class="ribbon">
        ${groups.map((g) => html`
          <div class=${classMap({ group: true, tight: !!g.tight })}>
            <div class="tools">
              ${g.tools.map((t) => html`
                <button class=${classMap({ item: true, off: !!t.off, on: !!t.on })}>
                  <span class="pic">${ico(26, 26, ribbonIcons[t.icon])}</span>
                  <span class="name">${t.label}</span>
                  ${t.drop ? html`<svg width="10" height="5" viewBox="0 0 10 5" aria-hidden="true"><path d="M0 0h10L5 5z" fill=${t.off ? "#b9b9b9" : "#454545"}/></svg>` : nothing}
                </button>`)}
            </div>
            <div class="caption"><span>${g.name}</span>${g.launcher ? html`<button aria-label="主题元素设置">${launcherIcon()}</button>` : nothing}</div>
          </div>`)}
      </section>
      <main class="work">
        <div class="left"><mind-map></mind-map></div>
        <div class="right"><notes-panel></notes-panel></div>
      </main>
      <nav class="docs">
        <button class="arrow" aria-label="向左">${ico(6, 10, svg`<path d="M5.500 1v8L1 5z" stroke="#777"/>`)}</button>
        ${ico(21, 22, svg`<path d="M0 0L19 20.500h3V0z" fill="#f3f2f1"/><path d="M0 0L19 20.500h3" stroke="#a9a9a9"/>`)}
        ${documents.map((d, i) => html`<button class=${classMap({ doc: true, on: i === 0 })}>${this.docIcon()}<span>${d}</span>
          ${i === 0 ? html`${launcherIcon()}${ico(9, 9, svg`<path d="M.5.5l8 8M8.500.5l-8 8" stroke="#555"/>`)}` : nothing}</button>`)}
        <button class="end" aria-label="向右">${ico(6, 10, svg`<path d="M.5 1v8L5 5z" stroke="#777"/>`)}</button>
      </nav>
      <footer class="status">
        <button aria-label="备注">${ico(16, 16, svg`<path d="M1 1h14v14H1zM4 5h8M4 8h5M9 11h4" stroke=${G} stroke-width="1.500"/>`)}</button>
        <button aria-label="筛选">${ico(16, 16, svg`<path d="M0 0h16v3l-5 5v8H6V8L0 3z" fill=${G}/>`)}${caret("#444", 6)}</button>
        <button aria-label="详细级别">${ico(16, 16, svg`<path d="M4 2.500a7 7 0 1 0 8 0M8 4v9M4 8.500h8" stroke=${G} stroke-width="1.800"/><path d="M7 0h6v5z" fill=${G}/>`)}${caret("#444", 6)}</button>
        <button class="sel" aria-label="导图视图">${ico(16, 16, svg`<path d="M1 1h14v14H1z" stroke=${G} stroke-width="1.500"/><path d="M3 4h3v2H3zM10 4h3v2h-3zM6 7h4v3H6z" fill=${G}/><path d="M5 5l3 3 3-3" stroke=${G}/>`)}</button>
        <button aria-label="大纲视图">${ico(16, 16, svg`<path d="M1 1h14v14H1zM3 4h10M5 6.500h8M5 9h8" stroke=${G} stroke-width="1.500"/>`)}</button>
        <span class="pct">100%</span>
        <button aria-label="缩小">${ico(9, 16, svg`<path d="M0 8.500h8" stroke=${G}/>`)}</button>
        <input type="range" aria-label="缩放" min="0" max="200" value="100">
        <button aria-label="放大">${ico(9, 16, svg`<path d="M0 8.500h8M4 4.500v8" stroke=${G}/>`)}</button>
        <button aria-label="适合页面">${ico(16, 16, svg`<path d="M1 1h14v14H1z" stroke=${G} stroke-width="1.500"/><path d="M4 7V4h3M12 7V4H9M4 4l3 3M12 4L9 7" stroke=${G}/>`)}</button>
        <button class="last" aria-label="任务窗格">${ico(16, 16, svg`<path d="M0 0h9v16H0z" fill=${G}/><path d="M9 1h6v14" stroke=${G} stroke-width="1.500"/>`)}${caret("#444", 6)}</button>
      </footer>
      <div class="osd">暂停</div>
      <div class="ime">
        ${ico(18, 19, svg`<path d="M3 3q-2.500 5-1 9 2 5 7 5t7-5q1.500-4-1-9" stroke="#2f8168" stroke-width="2.800"/><path d="M6 1v8.500q0 3 3 3t3-3V1" stroke="#f08b32" stroke-width="4"/>`)}
        <span>英</span>
        ${ico(13, 14, svg`<path d="M9 0q8 7 0 12-5 3-9-1 6 1 8-3 2-3 1-8z" fill="#3d8acb"/>`)}
        ${ico(12, 14, svg`<circle cx="4" cy="5" r="1.800" fill="#3d8acb"/><path d="M8 8h3q.5 3-2.500 5 1-2-.5-2z" fill="#3d8acb"/>`)}
        ${ico(18, 13, svg`<path d="M0 0h18v13H0z" fill="#3d8acb"/><path d="M2 3.500h14M2 6.500h14" stroke="#fff" stroke-width="1.500" stroke-dasharray="2 1"/><path d="M4 10h10" stroke="#fff" stroke-width="1.500"/>`)}
        ${ico(12, 14, svg`<circle cx="6" cy="3.500" r="3.500" fill="#3d8acb"/><path d="M0 14V9q1-2 3-2h6q2 0 3 2v5z" fill="#3d8acb"/>`)}
        ${ico(15, 15, svg`<path d="M1.500 13.500L8 7" stroke="#3d8acb" stroke-width="3.400"/><path d="M10.500 1q-4 1-3.500 5 1 4 5 3 2.500-1 2.500-4L11.500 7 9 5z" fill="#3d8acb"/>`)}
      </div>
      <span class="mark m1"></span><span class="mark m2"></span><span class="mark m3"></span>`;
  }
}
